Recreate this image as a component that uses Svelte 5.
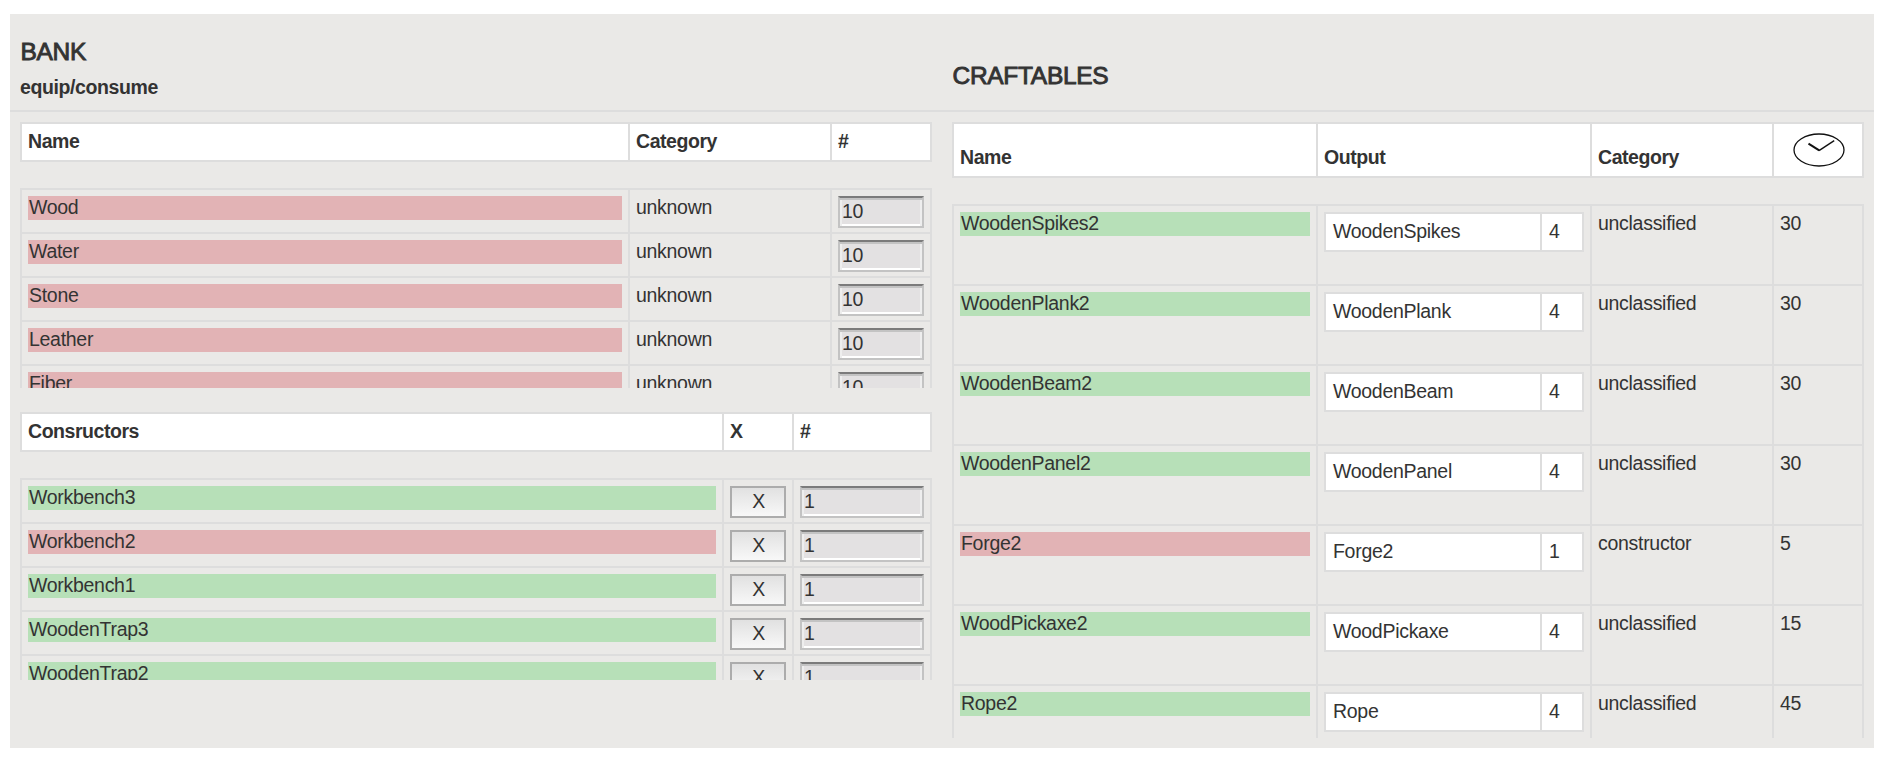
<script>
  const bank = ['Wood', 'Water', 'Stone', 'Leather', 'Fiber'];
  const constructors = [
    { name: 'Workbench3', ok: true },
    { name: 'Workbench2', ok: false },
    { name: 'Workbench1', ok: true },
    { name: 'WoodenTrap3', ok: true },
    { name: 'WoodenTrap2', ok: true }
  ];
  const craftables = [
    { name: 'WoodenSpikes2', out: 'WoodenSpikes', n: 4, cat: 'unclassified', time: 30, ok: true },
    { name: 'WoodenPlank2', out: 'WoodenPlank', n: 4, cat: 'unclassified', time: 30, ok: true },
    { name: 'WoodenBeam2', out: 'WoodenBeam', n: 4, cat: 'unclassified', time: 30, ok: true },
    { name: 'WoodenPanel2', out: 'WoodenPanel', n: 4, cat: 'unclassified', time: 30, ok: true },
    { name: 'Forge2', out: 'Forge2', n: 1, cat: 'constructor', time: 5, ok: false },
    { name: 'WoodPickaxe2', out: 'WoodPickaxe', n: 4, cat: 'unclassified', time: 15, ok: true },
    { name: 'Rope2', out: 'Rope', n: 4, cat: 'unclassified', time: 45, ok: true }
  ];
</script>

<main class="panel">
  <header class="top">
    <div class="titles">
      <h2>BANK</h2>
      <h3>equip/consume</h3>
    </div>
    <h2 class="right-title">CRAFTABLES</h2>
  </header>

  <div class="content">
    <section class="left">
      <div class="row head bank">
        <div class="cell">Name</div>
        <div class="cell">Category</div>
        <div class="cell">#</div>
      </div>
      <div class="list bank-list">
        {#each bank as name}
          <div class="row bank">
            <div class="cell"><div class="tag bad">{name}</div></div>
            <div class="cell">unknown</div>
            <div class="cell"><input value="10" /></div>
          </div>
        {/each}
      </div>

      <div class="row head cons">
        <div class="cell">Consructors</div>
        <div class="cell">X</div>
        <div class="cell">#</div>
      </div>
      <div class="list cons-list">
        {#each constructors as c}
          <div class="row cons">
            <div class="cell"><div class="tag" class:bad={!c.ok}>{c.name}</div></div>
            <div class="cell"><button>X</button></div>
            <div class="cell"><input value="1" /></div>
          </div>
        {/each}
      </div>
    </section>

    <section class="right">
      <div class="row head craft">
        <div class="cell">Name</div>
        <div class="cell">Output</div>
        <div class="cell">Category</div>
        <div class="cell clock">
          <svg width="56" height="36" viewBox="0 0 56 36" fill="none" stroke="#111">
            <ellipse cx="28" cy="18" rx="25" ry="16" stroke-width="1.3" />
            <path d="M17.5 11.6 28.2 18.4" stroke-width="2" />
            <path d="M28 18.6 43.2 8.6" stroke-width="1.4" />
          </svg>
        </div>
      </div>
      <div class="list craft-list">
        {#each craftables as c}
          <div class="row craft">
            <div class="cell"><div class="tag" class:bad={!c.ok}>{c.name}</div></div>
            <div class="cell">
              <div class="output"><span>{c.out}</span><span>{c.n}</span></div>
            </div>
            <div class="cell">{c.cat}</div>
            <div class="cell">{c.time}</div>
          </div>
        {/each}
      </div>
    </section>
  </div>
</main>

<style>
  :global(body) {
    background: #fff;
  }
  .panel,
  .panel * {
    box-sizing: border-box;
  }
  .panel {
    margin: 14px 10px 0;
    height: 734px;
    background: #eae9e7;
    color: #333;
    font: 19.5px/22px 'Liberation Sans', Arial, sans-serif;
    letter-spacing: -0.29px;
  }
  .top {
    display: grid;
    grid-template-columns: 932px 1fr;
    height: 98px;
    padding-left: 10px;
    border-bottom: 2px solid #ddd;
  }
  h2,
  h3 {
    margin: 0;
  }
  h2 {
    padding-top: 24px;
    padding-left: 0.5px;
    font-size: 24.5px;
    line-height: 28px;
    font-weight: 400;
    letter-spacing: -0.3px;
    -webkit-text-stroke: 0.9px #333;
  }
  h3 {
    padding-top: 9px;
    font-size: 19.5px;
    line-height: 24px;
    letter-spacing: -0.4px;
  }
  .right-title {
    padding-top: 48px;
  }
  .content {
    display: grid;
    grid-template-columns: 912px 912px;
    gap: 20px;
    padding: 10px;
  }
  .row {
    display: grid;
    border: 2px solid #ddd;
    border-top: 0;
  }
  .bank {
    grid-template-columns: 606px 202px 1fr;
    height: 44px;
  }
  .cons {
    grid-template-columns: 700px 70px 1fr;
    height: 44px;
  }
  .craft {
    grid-template-columns: 362px 274px 182px 1fr;
    height: 80px;
  }
  .cell {
    padding: 6px;
    min-width: 0;
  }
  .cell + .cell {
    border-left: 2px solid #ddd;
  }
  .head {
    height: 40px;
    border-top: 2px solid #ddd;
    background: #fff;
    font-size: 19.5px;
    line-height: 22px;
    font-weight: 700;
    letter-spacing: -0.45px;
  }
  .head.craft {
    height: 56px;
  }
  .head.craft .cell {
    padding-top: 22px;
  }
  .head.craft .clock {
    display: flex;
    justify-content: center;
    padding: 8px 0 0 2px;
  }
  .list {
    margin-top: 26px;
    border-top: 2px solid #ddd;
    overflow: hidden;
  }
  .bank-list {
    height: 200px;
    margin-bottom: 24px;
  }
  .cons-list {
    height: 202px;
  }
  .craft-list {
    height: 534px;
  }
  .tag {
    height: 24px;
    padding-left: 1px;
    background: #b7e0b8;
  }
  .tag.bad {
    background: #e2b3b5;
  }
  input,
  button {
    display: block;
    width: 100%;
    height: 32px;
    margin: 0;
    border-radius: 0;
    color: #333;
    font: inherit;
    letter-spacing: inherit;
  }
  input {
    padding: 0 2px 1px;
    border: 2px solid;
    border-color: #7b7b7b #c3c3c3 #c3c3c3;
    background: #e3e1e2;
    box-shadow:
      inset 0 2px #c3c3c3,
      inset 2px 0 #eee,
      inset -2px 0 #eee,
      inset 0 -2px #fff;
    outline: 0;
  }
  button {
    padding: 0 0 2px 1px;
    border: 2px solid #acacac;
    background: linear-gradient(#e1e1e1, #f8f8f8);
  }
  .output {
    display: grid;
    grid-template-columns: 214px 1fr;
    height: 40px;
    border: 2px solid #ddd;
    background: #fff;
  }
  .output span {
    padding: 6px 6px 6px 7px;
  }
  .output span + span {
    border-left: 2px solid #ddd;
  }
</style>
